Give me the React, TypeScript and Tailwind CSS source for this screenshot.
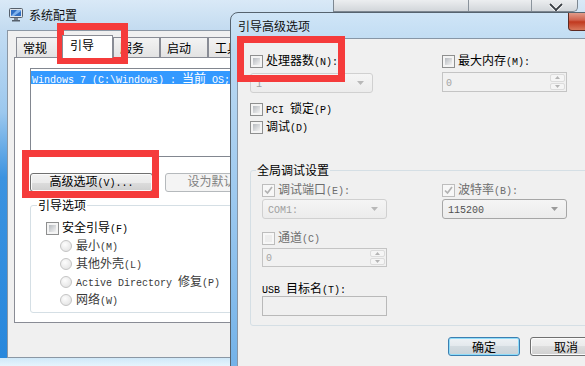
import React from 'react';

const CJK = "font-['Noto_Sans_CJK_SC',sans-serif]";
const MONO = "font-['Liberation_Mono',monospace] text-[10px]";

// SimSun-like text: ascii runs in a 6px-wide mono, CJK runs at 12px
function T({ s }: { s: string }) {
  const parts = s.match(/[\x20-\x7e]+|[^\x20-\x7e]+/g) ?? [];
  return (
    <span className="whitespace-pre">
      {parts.map((p, i) =>
        /^[\x20-\x7e]/.test(p) ? (
          <span key={i} className={MONO}>
            {p}
          </span>
        ) : (
          <span key={i} className={CJK}>
            {p}
          </span>
        )
      )}
    </span>
  );
}

function Check({ on, dis }: { on?: boolean; dis?: boolean }) {
  return (
    <span
      className={`relative inline-block h-[13px] w-[13px] shrink-0 border ${
        dis ? 'border-[#bdbdbd] bg-[#f7f7f7]' : 'border-[#8e8f8f] bg-[#f4f4f4]'
      }`}>
      {!on && (
        <span
          className={`absolute inset-[2px] ${
            dis ? 'bg-[#ededed]' : 'bg-gradient-to-br from-[#b6babf] to-[#f3f3f3]'
          }`}
        />
      )}
      {on && (
        <svg className="absolute left-[1px] top-[1px]" width="9" height="9" viewBox="0 0 9 9">
          <path d="M1 4.5 L3.5 7 L8 1" stroke="#b2b2b2" strokeWidth="1.7" fill="none" />
        </svg>
      )}
    </span>
  );
}

function Radio() {
  return (
    <span className="inline-block h-[12px] w-[12px] shrink-0 rounded-full border border-[#c4c4c4] bg-[radial-gradient(circle_at_40%_35%,#fdfdfd_0%,#dedede_100%)]" />
  );
}

function Label({ s, dis, on }: { s: string; dis?: boolean; on?: boolean }) {
  return (
    <div className="flex h-[13px] items-center gap-[3px]">
      <Check on={on} dis={dis} />
      <span className={`leading-[14px] ${dis ? 'text-[#6d6d6d]' : 'text-black'}`}>
        <T s={s} />
      </span>
    </div>
  );
}

function Combo({ text, dis, w }: { text: string; dis?: boolean; w: string }) {
  return (
    <div
      className={`flex h-[20px] items-center rounded-[3px] border bg-gradient-to-b from-[#f5f5f5] to-[#ececec] pl-[5px] pr-[8px] ${
        dis ? 'border-[#d0d0d0] text-[#a0a0a0]' : 'border-[#a6a6a6] text-[#505050]'
      } ${w}`}>
      <span className="flex-1 leading-[14px]">
        <T s={text} />
      </span>
      <svg width="7" height="4" viewBox="0 0 7 4">
        <path d="M0 0H7L3.5 4Z" fill={dis ? '#b8b8b8' : '#9a9a9a'} />
      </svg>
    </div>
  );
}

function Spin({ w, h }: { w: string; h: string }) {
  return (
    <div className={`flex items-stretch border border-[#c4c4c4] bg-[#f1f1f1] ${w} ${h}`}>
      <span className="flex flex-1 items-center pl-[3px] text-[#a4a4a4]">
        <T s="0" />
      </span>
      <div className="flex w-[17px] flex-col gap-[1px] p-[1px]">
        <div className="flex flex-1 items-center justify-center rounded-[2px] border border-[#dcdcdc] bg-[#f5f5f5]">
          <svg width="5" height="3" viewBox="0 0 5 3">
            <path d="M2.5 0L5 3H0Z" fill="#b4b4b4" />
          </svg>
        </div>
        <div className="flex flex-1 items-center justify-center rounded-[2px] border border-[#dcdcdc] bg-[#f5f5f5]">
          <svg width="5" height="3" viewBox="0 0 5 3">
            <path d="M0 0H5L2.5 3Z" fill="#b4b4b4" />
          </svg>
        </div>
      </div>
    </div>
  );
}

function Btn({ label, w, dis, focus }: { label: string; w: string; dis?: boolean; focus?: boolean }) {
  const look = dis
    ? 'border-[#b5b9bc] bg-[#f4f4f4] text-[#838383]'
    : focus
      ? 'border-[#3c7fb1] bg-[linear-gradient(#eef2f5_0%,#e3e8ec_50%,#d3dbe0_50%,#c9d2d8_100%)] shadow-[inset_0_0_0_1px_#8fdcf9] text-black'
      : 'border-[#707070] bg-[linear-gradient(#f2f2f2_0%,#ebebeb_50%,#dddddd_50%,#cfcfcf_100%)] shadow-[inset_0_0_0_1px_#fbfbfb] text-black';
  return (
    <div className={`flex h-[19px] shrink-0 items-center justify-center overflow-hidden rounded-[3px] border leading-[14px] ${look} ${w}`}>
      <T s={label} />
    </div>
  );
}

const tabs = [
  { t: '常规', w: 'w-[46px]' },
  { t: '引导', w: 'w-[51px]', on: true },
  { t: '服务', w: 'w-[47px]' },
  { t: '启动', w: 'w-[48px]' },
  { t: '工具', w: 'w-[48px]' },
];

const radios = ['最小(M)', '其他外壳(L)', 'Active Directory 修复(P)', '网络(W)'];

function MainWindow() {
  return (
    <div className="flex h-full flex-col">
      <div className="flex h-[30px] shrink-0 items-center gap-[6px] bg-[linear-gradient(180deg,#d9e9f7_0%,#c3dbf0_100%)] pl-[9px]">
        <svg width="14" height="14" viewBox="0 0 14 14">
          <rect x="0.5" y="0.5" width="13" height="9" rx="1" fill="#dfe4ea" stroke="#56606c" />
          <rect x="2" y="2" width="10" height="6" fill="#2f6fc4" />
          <path d="M2 8 L8 2 H12 V3 L5 8Z" fill="#7fb2ec" />
          <rect x="5" y="10" width="4" height="2" fill="#7b8490" />
          <rect x="3" y="12" width="8" height="1.5" fill="#56606c" />
        </svg>
        <span className={`text-[12px] leading-[14px] text-[#111] ${CJK}`}>系统配置</span>
      </div>
      <div className="flex flex-1">
        <div className="w-[7px] bg-[linear-gradient(180deg,#c3dcf2_0%,#9cc8ee_25%,#3c93e0_45%,#2787dc_100%)]" />
        <div className="flex flex-1 flex-col border-b border-l border-t border-[#8b97a4] bg-[#f0f0f0]">
          <div className="ml-[8px] mt-[4px] flex h-[23px] items-end">
            {tabs.map((tb) =>
              tb.on ? (
                <div
                  key={tb.t}
                  className={`relative z-10 h-[23px] border border-b-0 border-[#898c95] bg-white pl-[7px] pt-[2px] leading-[14px] ${tb.w}`}>
                  <T s={tb.t} />
                </div>
              ) : (
                <div
                  key={tb.t}
                  className={`mb-[1px] h-[20px] border border-b-0 border-[#898c95] bg-gradient-to-b from-[#f3f3f3] to-[#e3e3e3] pl-[6px] pt-[3px] leading-[14px] ${tb.w}`}>
                  <T s={tb.t} />
                </div>
              )
            )}
          </div>
          <div className="-mt-[1px] ml-[6px] h-[266px] w-[560px] border border-[#898c95] bg-white pl-[15px] pt-[10px]">
            <div className="h-[89px] w-[420px] overflow-hidden border border-[#828790] bg-white pt-[2px]">
              <div className="h-[13px] bg-[#3399ff] pl-[1px] leading-[13px] text-white">
                <T s="Windows 7 (C:\Windows) : 当前 OS; 默认 OS" />
              </div>
            </div>
            <div className="mt-[16px] flex gap-[12px]">
              <Btn label="高级选项(V)..." w="w-[123px]" />
              <Btn label="设为默认值(S)" w="w-[123px]" dis />
            </div>
            <fieldset className="mt-[6px] h-[115px] w-[420px] rounded-[3px] border border-[#d5dfe5] pl-[15px]">
              <legend className="-ml-[9px] px-[1px] leading-[14px]">
                <T s="引导选项" />
              </legend>
              <div className="mt-[10px] flex h-[13px] items-center gap-[3px]">
                <Check />
                <span className="leading-[14px]">
                  <T s="安全引导(F)" />
                </span>
              </div>
              <div className="ml-[14px] mt-[2px] flex flex-col">
                {radios.map((r) => (
                  <div key={r} className="flex h-[18px] items-center gap-[4px] text-[#3a3a3a]">
                    <Radio />
                    <span className="leading-[14px]">
                      <T s={r} />
                    </span>
                  </div>
                ))}
              </div>
            </fieldset>
          </div>
        </div>
      </div>
      <div className="h-[8px] shrink-0 bg-[linear-gradient(180deg,#cfe8f8_0%,#e6f4fc_100%)]" />
    </div>
  );
}

function AdvancedDialog() {
  return (
    <div className="absolute left-[230px] top-[12px] flex h-[370px] w-[382px] flex-col overflow-hidden rounded-tl-[8px] border border-[#56636f] bg-[linear-gradient(180deg,#cfe5f7_0%,#bcd9f1_10%,#9dc9ef_50%,#6fb0e8_100%)]">
      <div className="relative flex h-[25px] shrink-0 items-center pl-[7px]">
        <span className="leading-[14px] text-[#111]">
          <T s="引导高级选项" />
        </span>
        <div className="absolute left-[337px] top-[-1px] h-[19px] w-[46px] rounded-b-[4px] border border-t-0 border-[#5e2a22] bg-[linear-gradient(180deg,#e3a493_0%,#d0614c_45%,#c1391f_55%,#d8785c_100%)]" />
      </div>
      <div className="flex flex-1">
        <div className="w-[6px]" />
        <div className="flex-1 border-l border-t border-[#8796a6] bg-[#f0f0f0] pl-[12px] pt-[16px]">
          <div className="flex">
            <div className="w-[192px]">
              <Label s="处理器数(N):" />
              <div className="mt-[5px]">
                <Combo text="1" dis w="w-[123px]" />
              </div>
            </div>
            <div>
              <Label s="最大内存(M):" />
              <div className="mt-[4px]">
                <Spin w="w-[125px]" h="h-[20px]" />
              </div>
            </div>
          </div>
          <div className="mt-[10px]">
            <Label s="PCI 锁定(P)" />
          </div>
          <div className="mt-[5px]">
            <Label s="调试(D)" />
          </div>
          <fieldset className="mt-[29px] h-[163px] w-[345px] rounded-[3px] border border-[#d5dfe5] pl-[11px]">
            <legend className="-ml-[6px] px-[1px] leading-[14px]">
              <T s="全局调试设置" />
            </legend>
            <div className="mt-[7px] flex">
              <div className="w-[180px]">
                <Label s="调试端口(E):" dis on />
                <div className="mt-[2px]">
                  <Combo text="COM1:" dis w="w-[125px]" />
                </div>
              </div>
              <div>
                <Label s="波特率(B):" dis on />
                <div className="mt-[2px]">
                  <Combo text="115200" w="w-[125px]" />
                </div>
              </div>
            </div>
            <div className="mt-[13px]">
              <Label s="通道(C)" dis />
            </div>
            <div className="mt-[3px]">
              <Spin w="w-[125px]" h="h-[19px]" />
            </div>
            <div className="mt-[14px] h-[14px] leading-[14px]">
              <T s="USB 目标名(T):" />
            </div>
            <div className="mt-[1px] h-[20px] w-[125px] border border-[#b9b9b9] bg-[#f0f0f0]" />
          </fieldset>
          <div className="ml-[198px] mt-[11px] flex gap-[10px]">
            <Btn label="确定" w="w-[72px]" focus />
            <Btn label="取消" w="w-[72px]" />
          </div>
        </div>
      </div>
    </div>
  );
}

export default function App() {
  return (
    <div className={`relative h-[366px] w-[585px] overflow-hidden bg-[#c9e0f4] text-[12px] leading-[14px] text-black ${CJK}`}>
      <MainWindow />

      {/* caption buttons of the window behind, mostly hidden */}
      <div className="absolute left-[333px] top-0 h-[12px] w-[245px] overflow-hidden rounded-br-[5px] border border-t-0 border-[#7d8791] bg-[linear-gradient(180deg,#eceef0_0%,#d2d6da_100%)]">
        <div className="absolute left-[134px] top-0 h-full w-px bg-[#8a939c]" />
        <div className="absolute left-[197px] top-0 h-full w-px bg-[#8a939c]" />
        <svg className="absolute left-[214px] top-[3px]" width="16" height="12" viewBox="0 0 16 12">
          <path d="M2 1 L8 7 L14 1 M8 7 V12" stroke="#ffffff" strokeWidth="3.5" fill="none" />
          <path d="M2 1 L8 7 L14 1 M8 7 V12" stroke="#3a3f45" strokeWidth="1.8" fill="none" />
        </svg>
      </div>

      <AdvancedDialog />

      {/* red annotation boxes */}
      <div className="absolute left-[57px] top-[23px] h-[41px] w-[71px] border-[7px] border-[#f53b3b]" />
      <div className="absolute left-[22px] top-[150px] h-[48px] w-[137px] border-[7px] border-[#f53b3b]" />
      <div className="absolute left-[237px] top-[36px] h-[46px] w-[108px] border-[7px] border-[#f53b3b]" />
    </div>
  );
}
